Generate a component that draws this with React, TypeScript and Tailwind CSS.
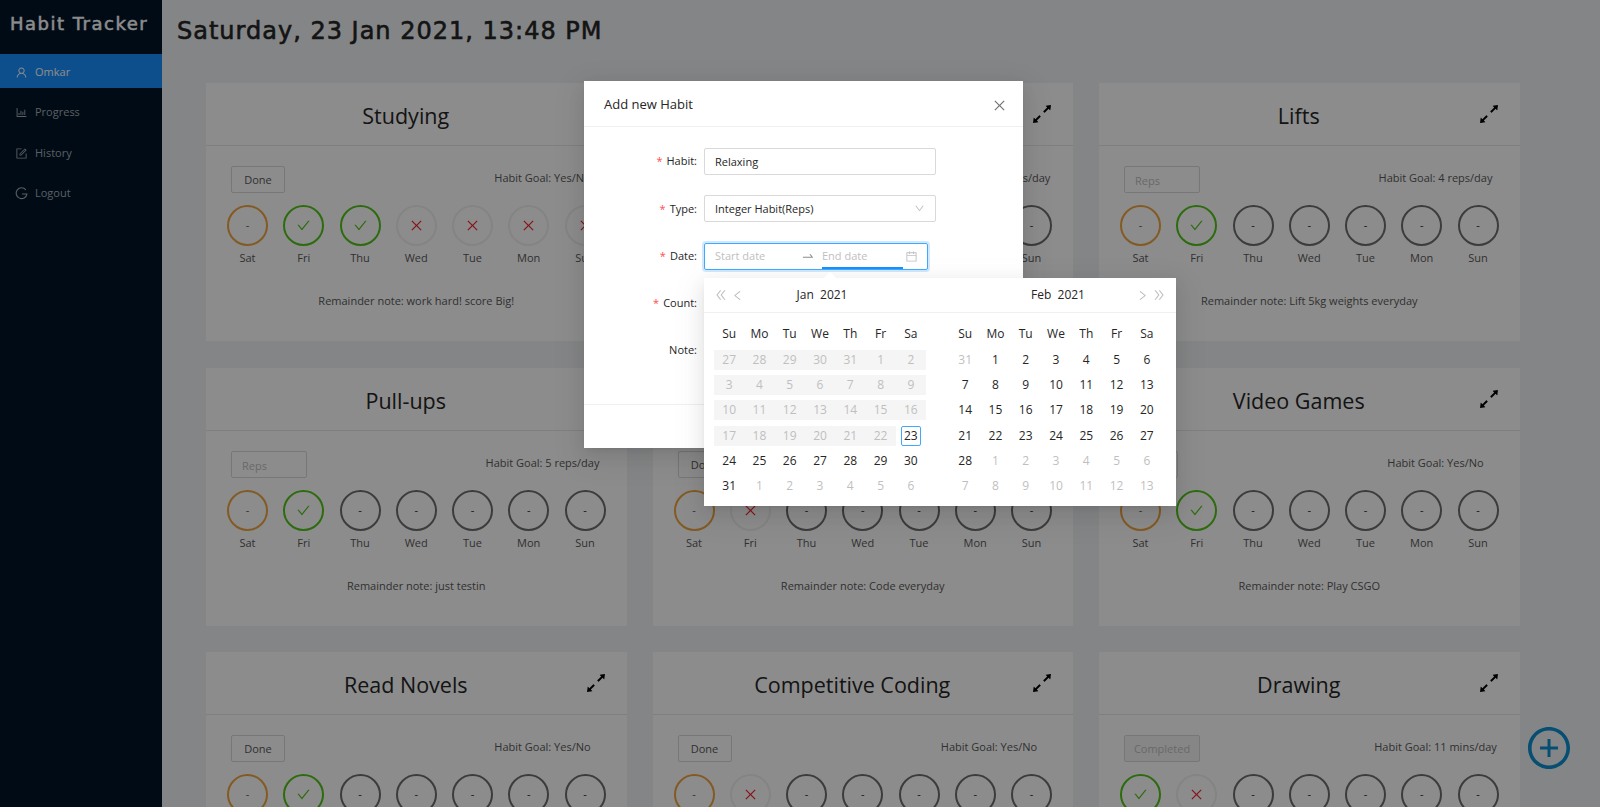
import React from "react";
import {
	AiOutlineUser,
	AiOutlineBarChart,
	AiOutlineForm,
	AiOutlineClose,
	AiOutlineCheck,
	AiOutlineArrowsAlt,
	AiOutlineDown,
	AiOutlineCalendar,
	AiOutlineSwapRight,
	AiOutlineDoubleLeft,
	AiOutlineDoubleRight,
	AiOutlineLeft,
	AiOutlineRight,
	AiOutlinePlusCircle,
} from "react-icons/ai";

type Mark = "today" | "done" | "miss" | "none";

type Habit = {
	name: string;
	action: "Done" | "Reps" | "Completed";
	goal: string;
	marks: Mark[];
	note: string;
};

const DAYS = ["Sat", "Fri", "Thu", "Wed", "Tue", "Mon", "Sun"];
const WEEK = ["Su", "Mo", "Tu", "We", "Th", "Fr", "Sa"];

const rest: Mark[] = ["none", "none", "none", "none", "none"];

const habits: Habit[] = [
	{
		name: "Studying",
		action: "Done",
		goal: "Habit Goal: Yes/No",
		marks: ["today", "done", "done", "miss", "miss", "miss", "miss"],
		note: "Remainder note: work hard! score Big!",
	},
	{
		name: "",
		action: "Reps",
		goal: "Habit Goal: 30 mins/day",
		marks: ["today", "done", ...rest],
		note: "",
	},
	{
		name: "Lifts",
		action: "Reps",
		goal: "Habit Goal: 4 reps/day",
		marks: ["today", "done", ...rest],
		note: "Remainder note: Lift 5kg weights everyday",
	},
	{
		name: "Pull-ups",
		action: "Reps",
		goal: "Habit Goal: 5 reps/day",
		marks: ["today", "done", ...rest],
		note: "Remainder note: just testin",
	},
	{
		name: "",
		action: "Done",
		goal: "",
		marks: ["today", "miss", ...rest],
		note: "Remainder note: Code everyday",
	},
	{
		name: "Video Games",
		action: "Done",
		goal: "Habit Goal: Yes/No",
		marks: ["today", "done", ...rest],
		note: "Remainder note: Play CSGO",
	},
	{
		name: "Read Novels",
		action: "Done",
		goal: "Habit Goal: Yes/No",
		marks: ["today", "done", ...rest],
		note: "",
	},
	{
		name: "Competitive Coding",
		action: "Done",
		goal: "Habit Goal: Yes/No",
		marks: ["today", "miss", ...rest],
		note: "",
	},
	{
		name: "Drawing",
		action: "Completed",
		goal: "Habit Goal: 11 mins/day",
		marks: ["done", "miss", ...rest],
		note: "",
	},
];

const MarkCircle: React.FC<{mark: Mark}> = ({mark}) => {
	if (mark === "done") {
		return (
			<div className="w-[41px] h-[41px] rounded-full border-[2.5px] border-[#52c41a] flex items-center justify-center text-[#52c41a]">
				<AiOutlineCheck size={15} />
			</div>
		);
	}
	if (mark === "miss") {
		return (
			<div className="w-[41px] h-[41px] rounded-full border-[2.5px] border-[#f0f0f0] flex items-center justify-center text-[#f5222d]">
				<AiOutlineClose size={15} />
			</div>
		);
	}
	return (
		<div
			className={
				mark === "today"
					? "w-[41px] h-[41px] rounded-full border-[2.5px] border-[#eea540] flex items-center justify-center text-[11px] text-[#595959]"
					: "w-[41px] h-[41px] rounded-full border-[2.5px] border-[#6e6e6e] flex items-center justify-center text-[11px] text-[#262626]"
			}
		>
			-
		</div>
	);
};

const HabitCard: React.FC<{habit: Habit}> = ({habit}) => (
	<div className="h-[258px] bg-white">
		<div className="relative h-[63px] border-b border-[#e8e8e8] flex items-center justify-center pr-[21px] pt-1">
			<h2 className="text-[21.5px] text-[#262626] leading-none">
				{habit.name}
			</h2>
			<AiOutlineArrowsAlt
				size={26}
				className="absolute right-[18px] top-[18px] text-black"
			/>
		</div>

		<div className="flex justify-between pt-5 px-[25px] h-[59px]">
			{habit.action === "Reps" ? (
				<div className="w-[76px] h-[27px] border border-[#d9d9d9] rounded-[2px] px-2.5 text-[11px] leading-[27px] text-[#bfbfbf]">
					Reps
				</div>
			) : habit.action === "Completed" ? (
				<div className="w-[76px] h-[27px] border border-[#d9d9d9] rounded-[2px] bg-[#f5f5f5] text-center text-[11px] leading-[25px] text-[#bfbfbf]">
					Completed
				</div>
			) : (
				<div className="w-[54px] h-[27px] border border-[#d9d9d9] rounded-[2px] text-center text-[11px] leading-[25px] text-[#595959]">
					Done
				</div>
			)}
			<span className="w-[160px] -mr-[21px] text-center text-[11px] leading-[24px] text-[#595959]">
				{habit.goal}
			</span>
		</div>

		<div className="flex justify-between px-[21px]">
			{DAYS.map((day, idx) => (
				<div key={day} className="flex flex-col items-center w-[41px]">
					<MarkCircle mark={habit.marks[idx]} />
					<span className="pt-0.5 text-[11px] leading-5 text-[#595959]">
						{day}
					</span>
				</div>
			))}
		</div>

		<p className="mt-[25px] text-center text-[11px] leading-4 text-[#595959]">
			{habit.note}
		</p>
	</div>
);

const MonthGrid: React.FC<{
	rows: number[][];
	isDim: (row: number, col: number) => boolean;
	isOff?: (row: number, col: number) => boolean;
}> = ({rows, isDim, isOff}) => (
	<div className="pl-2.5 pr-3.5">
		<div className="grid grid-cols-7 h-[34px] items-center pt-[7px]">
			{WEEK.map((w) => (
				<span key={w} className="text-center text-xs text-[#262626]">
					{w}
				</span>
			))}
		</div>
		{rows.map((row, r) => (
			<div key={r} className="grid grid-cols-7 h-[25.3px] items-center">
				{row.map((d, c) => {
					const dim = isDim(r, c);
					const off = isOff?.(r, c);
					const today = r === 3 && c === 6 && !!isOff;
					return (
						<div
							key={c}
							className={
								off
									? "h-5 bg-[#f5f5f5] text-center text-xs leading-5 text-[#bfbfbf]"
									: "h-5 text-center text-xs leading-5"
							}
						>
							<span
								className={
									today
										? "inline-block w-5 h-5 border border-[#40a9ff] rounded-[2px] leading-[18px] text-[#262626]"
										: dim
											? "text-[#bfbfbf]"
											: off
												? ""
												: "text-[#262626]"
								}
							>
								{d}
							</span>
						</div>
					);
				})}
			</div>
		))}
	</div>
);

const janRows = [
	[27, 28, 29, 30, 31, 1, 2],
	[3, 4, 5, 6, 7, 8, 9],
	[10, 11, 12, 13, 14, 15, 16],
	[17, 18, 19, 20, 21, 22, 23],
	[24, 25, 26, 27, 28, 29, 30],
	[31, 1, 2, 3, 4, 5, 6],
];

const febRows = [
	[31, 1, 2, 3, 4, 5, 6],
	[7, 8, 9, 10, 11, 12, 13],
	[14, 15, 16, 17, 18, 19, 20],
	[21, 22, 23, 24, 25, 26, 27],
	[28, 1, 2, 3, 4, 5, 6],
	[7, 8, 9, 10, 11, 12, 13],
];

const Calendar: React.FC = () => (
	<div className="absolute left-[704px] top-[278px] w-[472px] h-[228px] bg-white shadow-[0_3px_6px_-4px_rgba(0,0,0,0.12),0_6px_16px_0_rgba(0,0,0,0.08),0_9px_28px_8px_rgba(0,0,0,0.05)]">
		<div className="absolute left-[121px] -top-[4px] w-2.5 h-2.5 rotate-45 bg-white" />
		<div className="flex h-[35px] border-b border-[#f0f0f0] items-center text-[#bfbfbf]">
			<div className="relative flex-1 flex items-center pl-2.5">
				<AiOutlineDoubleLeft size={14} />
				<AiOutlineLeft size={13} className="ml-[3px]" />
				<span className="absolute inset-x-0 text-center text-xs text-[#262626]">
					Jan&nbsp; 2021
				</span>
			</div>
			<div className="relative flex-1 flex items-center justify-end pr-2.5">
				<span className="absolute inset-x-0 text-center text-xs text-[#262626]">
					Feb&nbsp; 2021
				</span>
				<AiOutlineRight size={13} className="mr-[3px]" />
				<AiOutlineDoubleRight size={14} />
			</div>
		</div>
		<div className="grid grid-cols-2">
			<MonthGrid
				rows={janRows}
				isDim={(r, c) => r === 5 && c > 0}
				isOff={(r, c) => r < 3 || (r === 3 && c < 6)}
			/>
			<MonthGrid
				rows={febRows}
				isDim={(r, c) =>
					(r === 0 && c === 0) || (r === 4 && c > 0) || r === 5
				}
			/>
		</div>
	</div>
);

const FormLabel: React.FC<{text: string; required?: boolean}> = ({
	text,
	required = true,
}) => (
	<label className="w-[120px] pr-[7px] text-right text-[11px] text-[#262626]">
		{required && <span className="mr-1 text-[#ff4d4f]">*</span>}
		{text}:
	</label>
);

const AddHabitModal: React.FC = () => (
	<div className="absolute left-[584px] top-[81px] w-[439px] h-[367px] bg-white shadow-[0_3px_6px_-4px_rgba(0,0,0,0.12),0_6px_16px_0_rgba(0,0,0,0.08),0_9px_28px_8px_rgba(0,0,0,0.05)]">
		<div className="flex items-center justify-between h-[46px] pl-5 pr-[16px] pt-[3px] border-b border-[#f0f0f0]">
			<span className="text-[13px] text-[#262626]">Add new Habit</span>
			<AiOutlineClose size={15} className="text-[#737373]" />
		</div>
		<div className="flex flex-col gap-[20.3px] pt-[21px]">
			<div className="flex items-center h-[27px]">
				<FormLabel text="Habit" />
				<div className="w-[232px] h-[27px] border border-[#d9d9d9] rounded-[2px] px-2.5 text-[11px] leading-[25px] text-[#262626]">
					Relaxing
				</div>
			</div>
			<div className="flex items-center h-[27px]">
				<FormLabel text="Type" />
				<div className="flex items-center justify-between w-[232px] h-[27px] border border-[#d9d9d9] rounded-[2px] px-2.5 text-[11px] text-[#262626]">
					Integer Habit(Reps)
					<AiOutlineDown size={11} className="text-[#bfbfbf]" />
				</div>
			</div>
			<div className="flex items-center h-[27px]">
				<FormLabel text="Date" />
				<div className="relative flex items-center w-[224px] h-[27px] border border-[#40a9ff] rounded-[2px] shadow-[0_0_0_2px_rgba(24,144,255,0.2)] pl-2.5 text-[11px] text-[#bfbfbf]">
					<span className="w-[86px]">Start date</span>
					<AiOutlineSwapRight size={14} className="text-[#8c8c8c]" />
					<span className="ml-[7px]">End date</span>
					<AiOutlineCalendar size={13} className="absolute right-[9px]" />
					<div className="absolute left-[117px] bottom-0 w-[81px] h-0.5 bg-[#1890ff]" />
				</div>
			</div>
			<div className="flex items-center h-[27px]">
				<FormLabel text="Count" />
			</div>
			<div className="flex items-center h-[27px]">
				<FormLabel text="Note" required={false} />
			</div>
		</div>
		<div className="absolute left-0 right-0 top-[323px] border-t border-[#f0f0f0]" />
	</div>
);

const NavItem: React.FC<{
	icon: React.ReactNode;
	label: string;
	active?: boolean;
}> = ({icon, label, active}) => (
	<div
		className={
			active
				? "flex items-center gap-[7px] h-[34px] pl-[15px] pt-0.5 bg-[#1890ff] text-white text-[11px]"
				: "flex items-center gap-[7px] h-[34px] pl-[15px] pt-0.5 text-[#a6adb4] text-[11px]"
		}
	>
		{icon}
		{label}
	</div>
);

const LogoutIcon: React.FC = () => (
	<svg width="13" height="13" viewBox="0 0 12 12" fill="none" stroke="currentColor">
		<path d="M10 2.6A5 5 0 1 0 11 6.5H6.5" strokeWidth="1" />
	</svg>
);

export default function App() {
	return (
		<div className="relative flex h-screen overflow-hidden bg-[#f0f2f5] font-['Open_Sans',sans-serif]">
			<aside className="w-[162px] shrink-0 bg-[#001529]">
				<div className="h-[54px] pl-[10px] pt-[14px] font-['DejaVu_Sans',sans-serif] text-[18px] leading-5 tracking-[1.5px] text-white [-webkit-text-stroke:0.5px_white]">
					Habit Tracker
				</div>
				<nav className="flex flex-col gap-[6.5px]">
					<NavItem
						active
						icon={<AiOutlineUser size={13} />}
						label="Omkar"
					/>
					<NavItem icon={<AiOutlineBarChart size={13} />} label="Progress" />
					<NavItem icon={<AiOutlineForm size={13} />} label="History" />
					<NavItem icon={<LogoutIcon />} label="Logout" />
				</nav>
			</aside>

			<main className="flex-1 pl-[44px]">
				<h1 className="h-[83px] -ml-[29px] pt-[18px] font-['DejaVu_Sans',sans-serif] text-[24px] leading-[26px] tracking-[1px] text-[#262626] [-webkit-text-stroke:0.6px_#262626]">
					Saturday, 23 Jan 2021, 13:48 PM
				</h1>
				<div className="grid grid-cols-[repeat(3,420.5px)] gap-x-[26px] gap-y-[26.5px]">
					{habits.map((habit, idx) => (
						<HabitCard key={idx} habit={habit} />
					))}
				</div>
			</main>

			<AiOutlinePlusCircle
				size={48}
				className="absolute left-[1525px] top-[724px] text-[#0b8fd0]"
			/>

			<div className="absolute inset-0 bg-black/45" />
			<AddHabitModal />
			<Calendar />
		</div>
	);
}
